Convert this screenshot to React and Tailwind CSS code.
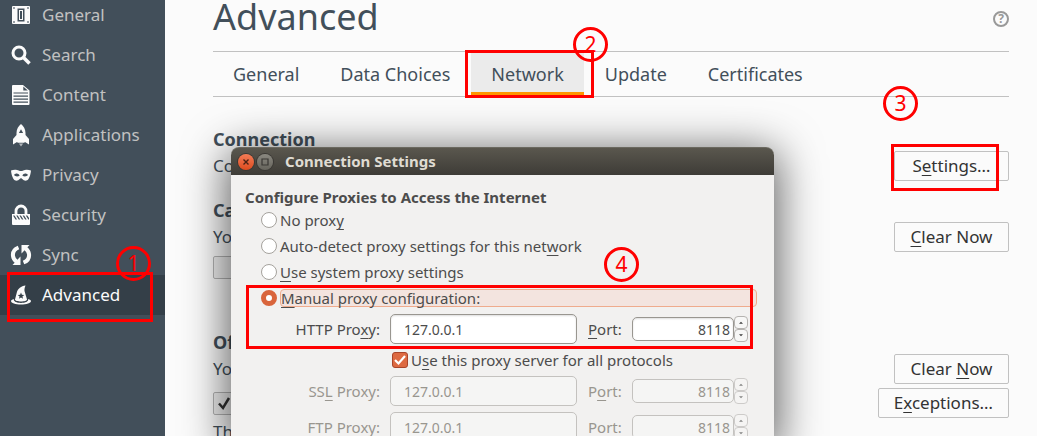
import React from "react";

const icons = {
  general: (
    <path
      fillRule="evenodd"
      d="M2 1h16a1 1 0 0 1 1 1v16a1 1 0 0 1-1 1H2a1 1 0 0 1-1-1V2a1 1 0 0 1 1-1zM2.300 2.300v1.400h1.400V2.300zM16.300 2.300v1.400h1.400V2.300zM2.300 16.300v1.400h1.400v-1.400zM16.300 16.300v1.400h1.400v-1.400zM6.500 3.500v13h7v-13zM8 5h4v10H8zM9 6v8h2V6z"
    />
  ),
  search: (
    <g fill="none" stroke="currentColor">
      <circle cx="8" cy="8" r="6" strokeWidth="3" />
      <path d="M12.500 12.500l6 6" strokeWidth="3.500" />
    </g>
  ),
  content: (
    <path
      fillRule="evenodd"
      d="M1 1a1 1 0 0 1 1-1h10l6.500 5.500V19a1 1 0 0 1-1 1H2a1 1 0 0 1-1-1zM12.300 1.500V5.500h4.500zM2.500 7.500v1h14.500v-1zM2.500 10.500v1.200h14.500v-1.200zM2.500 13.500v1.200h14.500v-1.200zM2.500 16.500v1.200h14.500v-1.200z"
    />
  ),
  applications: (
    <>
      <path
        fillRule="evenodd"
        d="M10-1C7.500 1 5.500 4 5.500 8v2L2 14v5.500l4-2.500.8.800h6.400l.8-.8 4 2.500V14l-3.500-4V8c0-4-2-7-4.500-9zM10 4.200L7.900 8h4.200z"
      />
      <path d="M7.800 18.500h4.400L10 21.500z" opacity=".6" />
    </>
  ),
  privacy: (
    <path
      fillRule="evenodd"
      d="M0 5.500c2-.8 4-1 6-.6 1.600.3 2.800 1.100 4 1.100s2.400-.8 4-1.100c2-.4 4-.2 6 .6-.3 3-1 6-2.500 8.500-1.200 1.800-3 2-4.700 1.200L10 13l-2.800 2.200C5.500 16 3.700 15.800 2.500 14 1 11.500.3 8.500 0 5.500zM3 10c1 1.600 4 2 5.700.5C7.500 8 4.500 7.800 3 10zM17 10c-1 1.600-4 2-5.700.5C12.500 8 15.500 7.800 17 10z"
    />
  ),
  security: (
    <>
      <path d="M5 10V6a5 5 0 0 1 10 0v4" fill="none" stroke="currentColor" strokeWidth="2.800" />
      <path
        fillRule="evenodd"
        d="M1 9h18v10a1 1 0 0 1-1 1H2a1 1 0 0 1-1-1zM2 10.500l2.500 4h1.500l-2.500-4zM5.200 10.500l2.500 4h1.500l-2.500-4zM8.400 10.500l2.500 4h1.500l-2.500-4zM11.600 10.500l2.500 4h1.500l-2.500-4zM14.800 10.500l2.500 4H18V13l-1.700-2.500z"
      />
    </>
  ),
  sync: (
    <>
      <path d="M7.500 2.500C3.500 4 1.500 7 2 11c.3 2.500 1.700 4.300 3.500 5.700" fill="none" stroke="currentColor" strokeWidth="4" />
      <path d="M9.500 11.500V20H1.500l2.800-3z" />
      <path d="M12.500 17.500C16.500 16 18.500 13 18 9c-.3-2.500-1.700-4.300-3.500-5.700" fill="none" stroke="currentColor" strokeWidth="4" />
      <path d="M10.500 8.500V0h8l-2.800 3z" />
    </>
  ),
  advanced: (
    <path
      fillRule="evenodd"
      d="M14.500.5C10 1 7 3.500 5.800 7.500L4 14.500c0 1.300 3 2 6 2s6-.7 6-2L13.500 6c-.2-1.800.2-3.500 1-5.500zM10 7.500l.9 2.300 2.400.1-1.900 1.500.7 2.400L10 12.400l-2.100 1.400.7-2.400-1.900-1.500 2.400-.1zM2.800 14C1 14.500 0 15.200 0 16c0 2 4.500 3.600 10 3.600S20 18 20 16c0-.8-1-1.500-2.800-2 .3 2.500-2.700 3.900-7.200 3.900S2.500 16.500 2.800 14z"
    />
  ),
};

const categories = [
  ["general", "General"],
  ["search", "Search"],
  ["content", "Content"],
  ["applications", "Applications"],
  ["privacy", "Privacy"],
  ["security", "Security"],
  ["sync", "Sync"],
  ["advanced", "Advanced"],
];

const tabs = ["General", "Data Choices", "Network", "Update", "Certificates"];

function Key({ children }) {
  return <span className="underline decoration-1 underline-offset-3">{children}</span>;
}

function Sidebar() {
  return (
    <nav className="-mt-[5px] w-[165px] shrink-0 bg-[#424f5a]">
      {categories.map(([id, name]) => (
        <a
          key={id}
          href={"#" + id}
          className={
            id === "advanced"
              ? "flex h-10 items-center gap-[11px] bg-[#343f48] pl-[11px] text-[17px] text-[#fbfbfb]"
              : "flex h-10 items-center gap-[11px] pl-[11px] text-[17px] text-[#c1c1c1]"
          }
        >
          <svg viewBox="0 0 20 20" className="size-5 shrink-0 overflow-visible text-[#fbfbfb]" fill="currentColor" aria-hidden="true">
            {icons[id]}
          </svg>
          {name}
        </a>
      ))}
    </nav>
  );
}

function PageButton({ children }) {
  return (
    <button className="h-[30px] min-w-[115px] shrink-0 rounded-xs border border-[#c1c1c1] bg-[#fbfbfb] px-[15px] text-[17px] leading-7 text-[#333]">
      {children}
    </button>
  );
}

function PageCheck({ label, checked }) {
  return (
    <span className="relative flex">
      <input
        type="checkbox"
        aria-label={label}
        defaultChecked={checked}
        className="peer size-[23px] appearance-none rounded-xs border border-[#b5b5b5] bg-[#f1f1f1]"
      />
      <svg viewBox="0 0 23 23" className="pointer-events-none absolute inset-0 hidden size-[23px] peer-checked:block" fill="none" stroke="#333" strokeWidth="2.5">
        <path d="M6 11.500l4 4.500 6-10" />
      </svg>
    </span>
  );
}

function Preferences() {
  return (
    <main className="min-w-0 flex-1 bg-[#fbfbfb] pr-7 pl-12 text-[17px] leading-6 text-[#424f5a]">
      <header className="flex h-[51px] items-start justify-between">
        <h1 className="text-[36px] leading-[34px]">Advanced</h1>
        <button aria-label="Help" className="mt-[11px] flex size-4 items-center justify-center rounded-full border-2 border-[#999] text-[12px] leading-3 font-bold text-[#999]">
          ?
        </button>
      </header>
      <div role="tablist" className="flex h-[46px] gap-px border-y border-[#c1c1c1] text-[18px]">
        {tabs.map((name) => (
          <button
            key={name}
            role="tab"
            aria-selected={name === "Network"}
            className={
              name === "Network"
                ? "h-[43px] border-b-3 border-[#ff9500] bg-[#ebebeb] px-5 pt-[3px]"
                : "h-[43px] px-5"
            }
          >
            {name}
          </button>
        ))}
      </div>
      <section className="mt-[30px]">
        <h2 className="text-[18px] font-bold">Connection</h2>
        <div className="flex items-center justify-between">
          <span>Connect</span>
          <PageButton>
            S<Key>e</Key>ttings…
          </PageButton>
        </div>
      </section>
      <section className="mt-[17px]">
        <h2 className="text-[18px] font-bold">Cache</h2>
        <div className="flex items-center justify-between">
          <span>Your</span>
          <PageButton>
            <Key>C</Key>lear Now
          </PageButton>
        </div>
        <div className="flex h-[30px] items-center">
          <PageCheck label="Override automatic cache management" />
        </div>
      </section>
      <section className="mt-12">
        <h2 className="text-[18px] font-bold">Offline</h2>
        <div className="flex items-center justify-between">
          <span>Your</span>
          <PageButton>
            Clear <Key>N</Key>ow
          </PageButton>
        </div>
        <div className="mt-1 flex items-center justify-between">
          <PageCheck label="Tell you when a website asks to store data" checked />
          <PageButton>
            E<Key>x</Key>ceptions…
          </PageButton>
        </div>
        <p className="mt-0.5">The</p>
      </section>
    </main>
  );
}

function ModeRadio({ id, children, checked }) {
  return (
    <div className="flex h-[26px] items-center gap-[3px] pl-4">
      <input
        type="radio"
        name="mode"
        id={id}
        defaultChecked={checked}
        className="size-4 shrink-0 appearance-none rounded-full border border-[#a5a29d] bg-white checked:border-[5px] checked:border-[#d9653c]"
      />
      <label
        htmlFor={id}
        className={
          checked
            ? "mr-[3px] h-[18px] flex-1 rounded border border-[#efab8d] bg-[#f3e4df] leading-4"
            : "leading-[18px]"
        }
      >
        {children}
      </label>
    </div>
  );
}

function ProxyRow({ id, label, portLabel, disabled }) {
  return (
    <div className={disabled ? "flex h-[30px] items-center text-[#99968f]" : "flex h-[30px] items-center"}>
      <label htmlFor={id} className="w-[135px] text-right">
        {label}
      </label>
      <input
        id={id}
        defaultValue="127.0.0.1"
        disabled={disabled}
        className="ml-2.5 h-[30px] w-[187px] rounded-[5px] border border-[#999690] bg-white px-[13px] text-[14px] shadow-[inset_0_1px_2px_#0002] disabled:border-[#c4c2bf] disabled:bg-[#f5f5f4] disabled:shadow-none"
      />
      <label htmlFor={id + "-port"} className="ml-[11px] w-11">
        {portLabel}
      </label>
      <input
        id={id + "-port"}
        defaultValue="8118"
        disabled={disabled}
        className="h-6 w-[102px] rounded-[5px] border border-[#999690] bg-white px-[3px] text-right text-[14px] shadow-[inset_0_1px_2px_#0002] disabled:border-[#c4c2bf] disabled:bg-[#f5f5f4] disabled:shadow-none"
      />
      <div className="flex flex-col text-[#3c3c3c]">
        {["M0 4l3-3 3 3z", "M0 0l3 3 3-3z"].map((d, i) => (
          <button
            key={d}
            disabled={disabled}
            aria-label={i ? "Decrease" : "Increase"}
            className="flex h-[13px] w-[14px] items-center justify-center rounded border border-[#b5b3b0] bg-[#f7f7f6] disabled:opacity-60"
          >
            <svg viewBox="0 0 6 4" className="h-[3px] w-1" fill="currentColor">
              <path d={d} />
            </svg>
          </button>
        ))}
      </div>
    </div>
  );
}

function ConnectionDialog() {
  return (
    <div role="dialog" aria-labelledby="dialog-title" className="absolute top-[147px] left-[231px] w-[543px] rounded-t-lg bg-[#f2f1f0] text-[15px] text-[#4c4c4c] shadow-[0_8px_44px_4px_#000000a0]">
      <div className="flex h-7 items-center gap-[3px] rounded-t-lg border-t border-[#6b6960] bg-linear-to-b from-[#5a574e] to-[#3e3c37] pl-[7px]">
        <button aria-label="Close" className="flex size-4 items-center justify-center rounded-full bg-linear-to-b from-[#f37b55] to-[#dc4b1c] text-[#4a2214] ring-1 ring-[#3a3834]">
          <svg viewBox="0 0 8 8" className="size-2" stroke="currentColor" strokeWidth="1.4">
            <path d="M1.500 1.500l5 5M6.500 1.500l-5 5" />
          </svg>
        </button>
        <button aria-label="Maximize" className="flex size-4 items-center justify-center rounded-full bg-linear-to-b from-[#8a8880] to-[#66645c] text-[#3a3834] ring-1 ring-[#3a3834]">
          <svg viewBox="0 0 8 8" className="size-2" fill="none" stroke="currentColor" strokeWidth="1.2">
            <path d="M1 1h6v6H1z" />
          </svg>
        </button>
        <h2 id="dialog-title" className="pl-[9px] font-bold text-[#dfdbd2]">
          Connection Settings
        </h2>
      </div>
      <form className="px-3.5 pt-3">
        <h3 className="h-5 leading-5 font-bold">Configure Proxies to Access the Internet</h3>
        <ModeRadio id="none">
          No prox<Key>y</Key>
        </ModeRadio>
        <ModeRadio id="auto">
          Auto-detect proxy settings for this net<Key>w</Key>ork
        </ModeRadio>
        <ModeRadio id="system">
          <Key>U</Key>se system proxy settings
        </ModeRadio>
        <ModeRadio id="manual" checked>
          <Key>M</Key>anual proxy configuration:
        </ModeRadio>
        <div className="mt-[3px]">
          <ProxyRow id="http" label={<>HTTP Pro<Key>x</Key>y:</>} portLabel={<><Key>P</Key>ort:</>} />
          <div className="flex h-8 items-center gap-[3px] pl-[147px]">
            <span className="relative flex">
              <input id="share" type="checkbox" defaultChecked className="size-4 appearance-none rounded-[3px] border border-[#a8452a] bg-[#dd6a42]" />
              <svg viewBox="0 0 16 16" className="pointer-events-none absolute inset-0 size-4" fill="none" stroke="#fff" strokeWidth="2.2">
                <path d="M3 8l3.500 3.500L13 4" />
              </svg>
            </span>
            <label htmlFor="share">
              U<Key>s</Key>e this proxy server for all protocols
            </label>
          </div>
          <div className="flex flex-col gap-1.5">
            <ProxyRow id="ssl" label={<>SS<Key>L</Key> Proxy:</>} portLabel={<>P<Key>o</Key>rt:</>} disabled />
            <ProxyRow id="ftp" label={<><Key>F</Key>TP Proxy:</>} portLabel={<>Po<Key>r</Key>t:</>} disabled />
          </div>
        </div>
      </form>
    </div>
  );
}

function Marks() {
  const circle =
    "absolute flex size-[35px] items-center justify-center rounded-full border-3 border-[#f00] text-[21px] leading-none text-[#f00]";
  return (
    <div className="pointer-events-none">
      <div className="absolute top-[272px] left-[7px] h-[50px] w-[146px] border-3 border-[#f00]" />
      <div className="absolute top-[50px] left-[465px] h-12 w-[129px] border-3 border-[#f00]" />
      <div className="absolute top-36 left-[891px] h-[47px] w-[108px] border-3 border-[#f00]" />
      <div className="absolute top-[285px] left-[246px] h-16 w-[507px] border-3 border-[#f00]" />
      <span className={circle + " top-[246px] left-[116px]"}>1</span>
      <span className={circle + " top-[27px] left-[573px]"}>2</span>
      <span className={circle + " top-[86px] left-[883px]"}>3</span>
      <span className={circle + " top-[247px] left-[604px]"}>4</span>
    </div>
  );
}

export default function App() {
  return (
    <div className="relative flex h-screen overflow-hidden font-['Noto_Sans',sans-serif]">
      <Sidebar />
      <Preferences />
      <ConnectionDialog />
      <Marks />
    </div>
  );
}
